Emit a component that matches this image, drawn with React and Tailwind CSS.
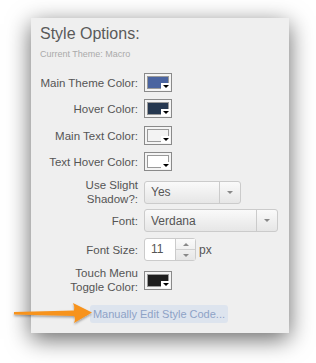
import React from 'react';

const Swatch = ({ color }) => (
    <div className="relative w-[28px] h-[19px] border border-[#8a8a8a] bg-[#f4f4f4] p-[2px]">
        <div className="w-full h-full border border-[#9a9a9a]" style={{ backgroundColor: color }}></div>
        <div className="absolute right-[1px] bottom-[1px] w-[9px] h-[7px] bg-white flex items-center justify-center">
            <div className="w-0 h-0 border-l-[3px] border-r-[3px] border-t-[3px] border-l-transparent border-r-transparent border-t-black"></div>
        </div>
    </div>
);

const Select = ({ value, width, sep }) => (
    <div className={`flex items-center h-[23px] rounded-[3px] border border-[#cbcbcb] bg-gradient-to-b from-[#fafafa] to-[#e6e6e6] ${width}`}>
        <span className="flex-1 pl-[6px] text-[12px] text-[#555]">{value}</span>
        <div className={`h-full border-l border-[#cbcbcb] flex items-center justify-center ${sep}`}>
            <div className="w-0 h-0 border-l-[3px] border-r-[3px] border-t-[3px] border-l-transparent border-r-transparent border-t-[#888]"></div>
        </div>
    </div>
);

const Row = ({ label, children, className = '' }) => (
    <div className={`grid grid-cols-[107px_1fr] gap-x-[6px] items-center ${className}`}>
        <div className="text-right text-[11.5px] leading-[14px] text-[#555]">{label}</div>
        <div className="flex items-center">{children}</div>
    </div>
);

export default function App() {
    return (
        <div className="relative w-[316px] h-[363px] bg-white pt-[18px] pl-[31px] font-['Liberation_Sans',Arial,sans-serif]">
            <div className="w-[258px] h-[315px] bg-[#efefef] shadow-[0_6px_22px_rgba(0,0,0,0.6)] pt-[5px] flex flex-col">
                <h1 className="pl-[9px] text-[16px] leading-[22px] text-[#5a5a5a]">Style Options:</h1>
                <p className="pl-[9px] mt-[3px] text-[9px] leading-[12px] text-[#aaa]">Current Theme: Macro</p>

                <Row label="Main Theme Color:" className="mt-[13px] h-[19px]">
                    <Swatch color="#4a64a0" />
                </Row>
                <Row label="Hover Color:" className="mt-[7px] h-[19px]">
                    <Swatch color="#263850" />
                </Row>
                <Row label="Main Text Color:" className="mt-[8px] h-[19px]">
                    <Swatch color="#f3f3f3" />
                </Row>
                <Row label="Text Hover Color:" className="mt-[7px] h-[19px]">
                    <Swatch color="#ffffff" />
                </Row>
                <Row label={<>Use Slight<br />Shadow?:</>} className="mt-[7px] h-[25px]">
                    <Select value="Yes" width="w-[97px]" sep="w-[21px]" />
                </Row>
                <Row label="Font:" className="mt-[6px] h-[23px]">
                    <Select value="Verdana" width="w-[134px]" sep="w-[21px]" />
                </Row>
                <Row label="Font Size:" className="mt-[6px] h-[23px]">
                    <div className="flex h-[23px] w-[52px] border border-[#cbcbcb] rounded-[3px] bg-white">
                        <span className="w-[30px] pl-[6px] text-[12px] leading-[21px] text-[#555]">11</span>
                        <div className="flex-1 flex flex-col border-l border-[#cbcbcb] bg-gradient-to-b from-[#fafafa] to-[#e6e6e6]">
                            <div className="flex-1 flex items-center justify-center border-b border-[#d0d0d0]">
                                <div className="w-0 h-0 border-l-[3px] border-r-[3px] border-b-[3px] border-l-transparent border-r-transparent border-b-[#888]"></div>
                            </div>
                            <div className="flex-1 flex items-center justify-center">
                                <div className="w-0 h-0 border-l-[3px] border-r-[3px] border-t-[3px] border-l-transparent border-r-transparent border-t-[#888]"></div>
                            </div>
                        </div>
                    </div>
                    <span className="ml-[3px] text-[12px] text-[#555]">px</span>
                </Row>
                <Row label={<>Touch Menu<br />Toggle Color:</>} className="mt-[5px] h-[27px]">
                    <Swatch color="#1e1e1e" />
                </Row>

                <div className="mt-[12px] ml-[59px] w-[138px] h-[18px] rounded-[3px] bg-[#dde4ee] flex items-center justify-center whitespace-nowrap text-[11px] text-[#8ea2c6]">
                    Manually Edit Style Code...
                </div>
            </div>

            {/* Arrow pointing at the button */}
            <svg className="absolute left-[12px] top-[300px]" width="82" height="26" viewBox="0 0 82 26">
                <defs>
                    <filter id="ash" x="-10%" y="-30%" width="120%" height="160%">
                        <feDropShadow dx="0" dy="1.5" stdDeviation="1.2" floodColor="#000" floodOpacity="0.35" />
                    </filter>
                </defs>
                <g filter="url(#ash)">
                    <path d="M2 12 L62 10.5 Q63 7 61 3 L80 12.5 L62 23 Q64 19 62 16 L2 14.5 Z" fill="#f7931e" />
                </g>
            </svg>
        </div>
    );
}
